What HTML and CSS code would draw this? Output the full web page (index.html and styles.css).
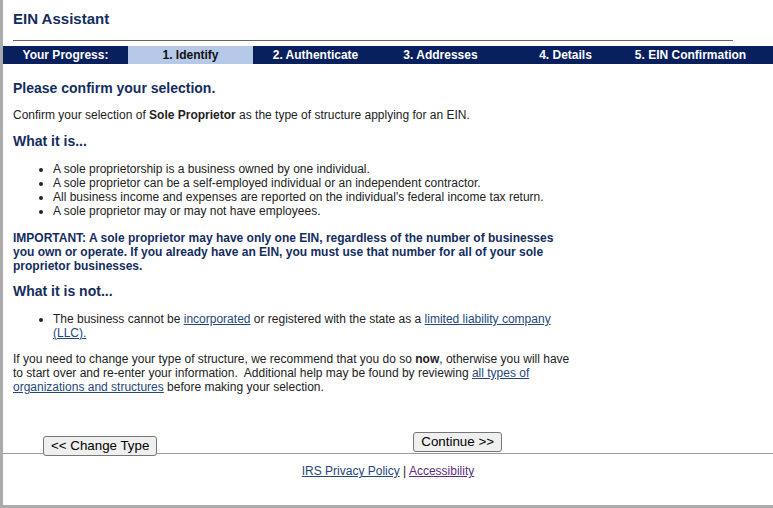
FILE: index.html
```html
<!DOCTYPE html>
<html lang="en">
<head>
    <meta charset="UTF-8">
    <meta name="viewport" content="width=device-width, initial-scale=1.0">
    <title>EIN Assistant</title>
    <link rel="stylesheet" href="styles.css">
</head>
<body>
    <div class="page">
        <div class="header">
            <h1>EIN Assistant</h1>
        </div>

        <!-- Progress bar -->
        <div class="progress">
            <div class="step">Your Progress:</div>
            <div class="step current">1. Identify</div>
            <div class="step">2. Authenticate</div>
            <div class="step">3. Addresses</div>
            <div class="step">4. Details</div>
            <div class="step">5. EIN Confirmation</div>
        </div>

        <div class="content">
            <h2 class="first">Please confirm your selection.</h2>
            <p class="intro">Confirm your selection of <strong>Sole Proprietor</strong> as the type of structure applying for an EIN.</p>

            <h2 class="is">What it is...</h2>
            <ul class="is-list">
                <li>A sole proprietorship is a business owned by one individual.</li>
                <li>A sole proprietor can be a self-employed individual or an independent contractor.</li>
                <li>All business income and expenses are reported on the individual's federal income tax return.</li>
                <li>A sole proprietor may or may not have employees.</li>
            </ul>

            <p class="important">IMPORTANT: A sole proprietor may have only one EIN, regardless of the number of businesses you own or operate. If you already have an EIN, you must use that number for all of your sole proprietor businesses.</p>

            <h2 class="not">What it is not...</h2>
            <ul class="not-list">
                <li>The business cannot be <a href="#">incorporated</a> or registered with the state as a <a href="#">limited liability company (LLC).</a></li>
            </ul>

            <p>If you need to change your type of structure, we recommend that you do so <strong>now</strong>, otherwise you will have to start over and re-enter your information.&nbsp; Additional help may be found by reviewing <a href="#">all types of organizations and structures</a> before making your selection.</p>
        </div>

        <div class="actions">
            <button type="button" class="btn-back">&lt;&lt; Change Type</button>
            <button type="button" class="btn-next">Continue &gt;&gt;</button>
        </div>

        <div class="footer">
            <a href="#">IRS Privacy Policy</a> | <a href="#" class="visited">Accessibility</a>
        </div>
    </div>
</body>
</html>
```

FILE: styles.css
```css
/* Basic Styles */
body {
    font-family: "Liberation Sans", Arial, sans-serif;
    font-size: 12px;
    line-height: 14px;
    color: #222;
    margin: 0;
    padding: 0;
    background: #fff;
}
.page {
    height: 505px;
    border-left: 3px solid #ababab;
    border-bottom: 3px solid #ababab;
    overflow: hidden;
}
.header {
    width: 720px;
    margin-left: 10px;
    padding: 10px 0 12px;
    border-bottom: 1px solid #666;
}
h1 {
    margin: 0;
    font-size: 15px;
    line-height: 18px;
    color: #142d5e;
}
.progress {
    display: flex;
    height: 18px;
    margin-top: 5px;
    background: #08205e;
}
.step {
    width: 125px;
    text-align: center;
    font-weight: bold;
    line-height: 18px;
    color: #fff;
}
.step.current {
    background: #b7c9e8;
    color: #111;
}
.content {
    width: 562px;
    margin-left: 10px;
}
h2 {
    margin: 0 0 11px;
    font-size: 14px;
    line-height: 17px;
    color: #142d5e;
}
h2.first {
    margin-top: 16px;
}
h2.is {
    margin-bottom: 12px;
}
h2.not {
    margin-bottom: 12px;
}
p {
    margin: 0;
}
.intro {
    margin-bottom: 11px;
}
ul {
    margin: 0;
    padding-left: 40px;
}
.is-list {
    margin-bottom: 13px;
}
.not-list {
    margin-bottom: 12px;
}
.important {
    margin-bottom: 10px;
    font-weight: bold;
    color: #142d5e;
}
a {
    color: #26467a;
}
a.visited {
    color: #5c2d82;
}
.actions {
    display: flex;
    align-items: flex-start;
    height: 24px;
    margin-top: 38px;
    margin-bottom: -3px;
}
button {
    font-family: "Liberation Sans", Arial, sans-serif;
    font-size: 13.333px;
    line-height: 16px;
    padding: 1px 7px;
    background: #efefef;
    color: #000;
    border: 1px solid #767676;
    border-radius: 3px;
}
.btn-back {
    margin: 4px 0 0 40px;
}
.btn-next {
    margin-left: 256px;
}
.footer {
    border-top: 1px solid #999;
    padding-top: 10px;
    text-align: center;
}
```
